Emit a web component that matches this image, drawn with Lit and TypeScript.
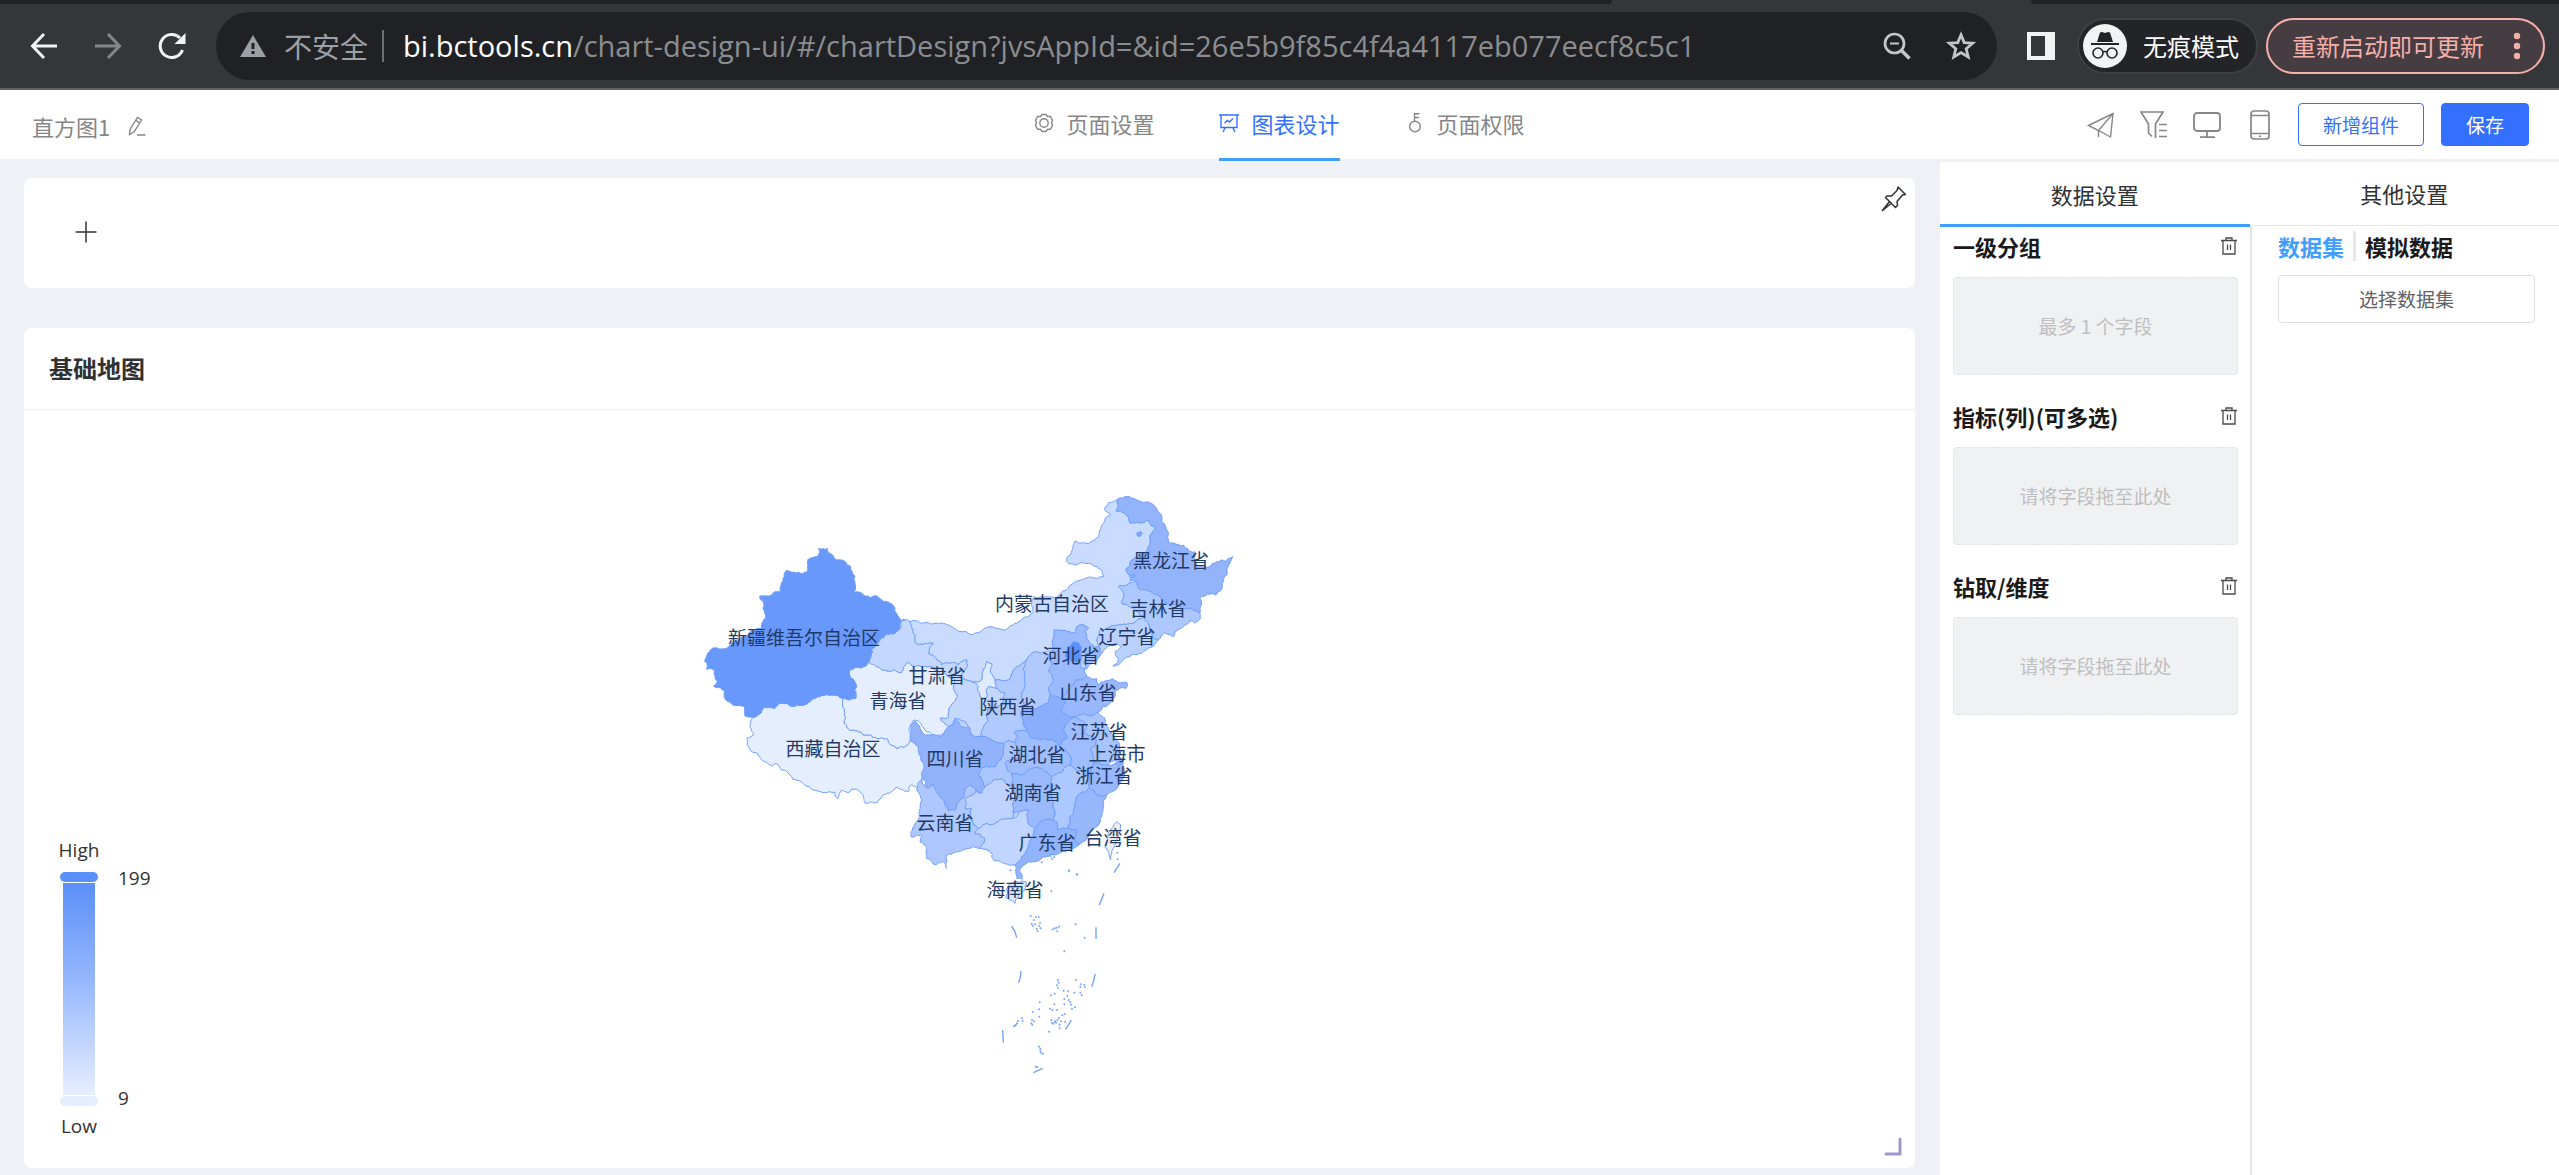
import { LitElement, html, svg, css } from "lit";
import { customElement, state } from "lit/decorators.js";

type Point = [number, number];

interface Region {
  fill: string;
  points: string;
  dx?: number;
  rough?: number;
}

/* Ground under the provinces, so that no seam between two borders shows through. */
const GROUND =
  "130,620 200,575 400,560 480,500 550,560 520,620 500,700 560,720 620,800 600,900 560,1000 500,1080 " +
  "400,1100 300,1130 200,1085 80,1080 85,900 100,780 150,745 170,660";

/* Outlines are in map units, three to a pixel. Later regions lie over earlier ones. */
const REGIONS: Region[] = [
  { fill: "#c9dbff", points: "0,422 28,424 70,429 130,430 170,450 220,463 270,440 340,435 365,420 400,395 395,370 400,350 430,352 470,352 500,330 530,303 570,290 610,290 605,270 570,250 530,255 500,245 500,235 525,183 570,188 597,170 600,150 615,115 632,105 613,85 625,68 650,60 655,75 648,92 675,100 690,130 720,130 745,122 765,145 750,165 745,200 735,220 690,255 678,268 690,285 690,310 655,320 672,345 665,370 700,385 730,412 700,430 655,435 600,450 590,480 600,505 570,490 555,455 565,445 550,432 530,440 525,460 480,450 462,450 458,480 460,510 410,515 380,540 345,565 325,600 285,600 270,575 275,550 260,545 250,570 245,600 215,605 180,590 203,560 200,540 150,550 125,555 85,520 100,490 55,495 40,460 28,424" },
  { fill: "#c4d7ff", points: "2,422 28,424 40,460 55,495 100,490 85,520 125,555 150,550 200,540 203,560 180,590 215,605 235,620 240,650 250,655 262,650 265,620 290,625 315,640 310,665 262,690 265,720 250,745 240,770 215,765 205,740 165,715 145,740 120,715 145,710 150,680 172,650 165,600 130,575 90,560 40,560 20,548 5,578 -40,573 -70,560 -95,548 -85,505 -60,480 -40,463 -20,462 -3,450" },
  { fill: "#e4eeff", dx: -630, points: "186,712 180,740 190,765 170,775 180,810 215,840 245,858 255,850 300,885 345,915 370,930 435,937 443,957 455,930 480,935 500,928 520,945 525,970 560,968 580,945 620,922 655,935 665,915 690,925 695,900 700,890 700,840 690,800 670,780 660,785 645,800 620,805 590,775 560,775 520,765 480,752 462,730 465,700 458,670 460,655 425,645 385,650 355,668 310,680 275,670 255,685 220,682 200,708" },
  { fill: "#e4eeff", dx: -630, points: "478,573 505,562 535,548 560,560 590,573 635,578 650,548 670,560 720,560 760,575 795,600 802,650 780,680 775,710 750,715 775,740 755,765 735,768 705,750 690,728 672,720 660,740 662,775 660,785 645,800 620,805 590,775 560,775 520,765 480,752 462,730 465,700 458,670 460,655 497,655 493,630 500,618 485,595" },
  { fill: "#6998fc", dx: -630, points: "385,206 412,205 415,218 435,238 470,250 483,270 495,290 495,310 490,337 520,345 560,348 590,365 608,374 615,395 632,420 627,450 610,462 590,463 570,480 545,505 535,548 505,562 478,573 485,595 500,618 493,630 497,655 460,655 425,645 385,650 355,668 310,680 275,670 255,685 220,682 200,708 186,712 165,708 160,678 130,675 108,660 105,635 70,618 82,605 75,572 50,568 43,542 52,520 80,503 110,505 145,480 215,445 215,430 228,405 220,365 208,350 250,338 275,335 270,322 290,270 320,278 353,275 355,237 385,228" },
  { fill: "#93b3fd", points: "650,60 700,55 745,65 770,85 785,125 805,165 808,190 850,195 885,215 890,255 930,260 950,245 998,230 985,260 980,285 970,305 948,345 900,352 900,398 870,385 845,390 800,370 780,350 750,333 715,325 710,305 690,300 690,285 678,268 690,255 735,220 745,200 750,165 765,145 745,122 720,130 690,130 675,100 648,92 655,75" },
  { fill: "#adc8ff", points: "690,310 710,305 715,325 750,333 780,350 800,370 845,390 870,385 900,398 902,415 885,430 870,420 850,440 825,455 820,470 795,458 775,480 755,470 745,430 730,412 700,385 665,370 672,345 655,320" },
  { fill: "#bad0ff", points: "730,412 745,430 755,470 775,480 745,505 725,520 690,530 665,545 640,560 655,535 645,515 665,500 650,492 620,500 605,520 600,505 590,480 600,450 655,435 700,430" },
  { fill: "#9bbafe", points: "462,450 480,450 525,460 530,440 550,432 565,445 555,455 570,490 600,505 605,520 590,545 565,560 552,570 560,590 530,600 510,620 500,640 480,655 450,640 460,600 445,575 455,555 440,520 460,510 458,480" },
  { fill: "#b8cfff", points: "545,515 562,525 550,545 556,566 540,560" },
  { fill: "#5b8ff9", points: "498,515 520,485 545,500 540,520 545,540 515,545 500,535" },
  { fill: "#b0caff", points: "410,515 440,520 455,555 445,575 460,600 450,640 445,670 410,685 370,685 365,655 370,630 375,590 370,570 380,540" },
  { fill: "#b0caff", points: "380,540 370,570 375,590 370,630 365,655 370,685 362,700 370,720 380,755 345,755 355,770 345,785 310,790 255,770 240,770 250,745 265,720 262,690 310,665 315,640 290,625 285,600 325,600 345,565" },
  { fill: "#e0eaff", points: "260,545 275,550 270,575 285,600 290,625 265,620 262,650 250,655 240,650 235,620 215,605 245,600 250,570" },
  { fill: "#98b7fe", points: "560,590 590,595 595,615 640,597 680,607 678,625 650,630 645,650 610,680 595,697 570,708 540,705 525,710 480,690 495,665 480,655 500,640 510,620 530,600" },
  { fill: "#8aaefc", points: "450,645 480,655 495,665 480,690 525,710 510,720 495,735 500,775 480,800 460,780 425,780 390,770 380,755 370,720 362,700 370,685 410,685 445,670" },
  { fill: "#a8c4ff", points: "525,710 540,705 570,708 595,697 615,715 625,745 650,780 665,815 645,840 625,855 600,850 580,850 570,810 590,780 550,760 560,740 540,720" },
  { fill: "#9fbdfe", points: "525,710 540,720 560,740 550,760 590,780 570,810 580,850 570,885 530,875 510,855 505,820 480,800 500,775 495,735 510,720" },
  { fill: "#acc7ff", points: "310,790 345,785 350,800 355,835 315,850 320,870 335,880 335,915 310,900 280,900 255,920 235,885 245,865 285,860 310,810" },
  { fill: "#9ebdfe", points: "345,755 380,755 390,770 425,780 460,780 480,800 505,820 510,855 490,870 455,890 440,875 395,865 370,885 335,880 320,870 315,850 355,835 350,800 345,785 355,770" },
  { fill: "#92b2fc", points: "30,735 45,722 60,745 75,765 105,765 125,770 145,740 160,735 165,715 185,740 205,740 215,765 240,770 255,770 310,790 310,810 285,860 245,865 235,885 255,920 245,940 210,915 195,930 180,960 165,990 145,992 130,960 100,910 85,925 75,920 65,890 70,850 55,805 32,780" },
  { fill: "#aec8ff", points: "65,895 75,920 85,925 100,910 130,960 145,992 165,990 180,960 195,930 210,915 230,935 195,955 195,985 215,985 215,1015 235,1045 225,1060 255,1075 240,1105 210,1105 170,1115 140,1125 140,1165 128,1145 105,1155 80,1135 80,1105 60,1085 65,1065 35,1072 40,1040 60,1010 65,960 50,925" },
  { fill: "#bed3ff", points: "195,955 230,935 245,940 255,920 280,900 310,900 335,915 345,950 340,1000 340,1015 300,1020 260,1030 235,1045 215,1015 215,985 195,985" },
  { fill: "#c0d5ff", points: "235,1045 260,1030 300,1020 340,1015 360,995 385,990 385,1030 405,1045 400,1070 385,1100 365,1130 345,1155 310,1150 280,1140 265,1110 240,1105 255,1075 225,1060" },
  { fill: "#9bbafe", points: "335,880 370,885 395,865 440,875 455,890 450,920 460,960 458,1020 420,1025 405,1045 385,1030 385,990 360,995 340,1000 345,950 335,915" },
  { fill: "#acc8ff", points: "455,890 490,870 510,855 530,875 570,885 570,925 540,940 525,980 510,1010 505,1045 475,1050 470,1025 458,1020 460,960 450,920" },
  { fill: "#97b7fd", points: "540,940 570,925 590,945 620,945 610,980 605,1010 575,1050 535,1095 530,1050 505,1045 510,1010 525,980" },
  { fill: "#98b7fe", points: "580,850 600,850 625,855 665,850 675,880 660,910 645,930 620,945 590,945 570,925 570,885" },
  { fill: "#8fb1fd", points: "645,840 668,835 672,850 655,858" },
  { fill: "#92b3fd", points: "405,1045 420,1025 458,1020 470,1025 475,1050 505,1045 530,1050 535,1095 510,1110 465,1125 440,1130 400,1145 370,1155 360,1175 367,1198 350,1195 345,1155 365,1130 385,1100 400,1070" },
  { fill: "#deeaff", points: "320,1225 345,1205 378,1205 375,1230 345,1270 320,1255" },
  { fill: "#ededed", points: "650,1025 662,1035 658,1060 650,1080 635,1115 632,1140 625,1115 615,1100 625,1060", rough: 0.05 },
  { fill: "#7fa6fc", points: "711,158 720,155 727,160 722,168 712,168" },
  { fill: "#8fb1fd", points: "694,285 702,281 706,289 698,292" },
];

const LABELS: [string, number, number][] = [
  ["新疆维吾尔自治区", 804, 636], ["甘肃省", 937, 674], ["青海省", 898, 699],
  ["西藏自治区", 833, 747], ["四川省", 955, 757], ["内蒙古自治区", 1052, 602],
  ["黑龙江省", 1171, 559], ["吉林省", 1158, 607], ["辽宁省", 1127, 635],
  ["河北省", 1071, 654], ["山东省", 1088, 691], ["陕西省", 1008, 705],
  ["江苏省", 1099, 730], ["上海市", 1117, 752], ["浙江省", 1104, 774],
  ["湖北省", 1037, 753], ["湖南省", 1033, 791], ["云南省", 945, 821],
  ["广东省", 1047, 841], ["台湾省", 1113, 836], ["海南省", 1015, 888],
];

const DASHES =
  "M480,130 L462,158 M432,220 L418,255 M408,322 L408,357 M155,318 Q166,332 170,353 M183,453 Q183,470 176,488 " +
  "M405,462 Q402,485 395,500 M334,600 L317,628 M128,630 L130,668 M248,745 L220,758";

const ISLETS =
  "212,287 228,292 236,291 222,300 215,312 225,313 240,309 238,318 218,318 230,327 233,334 242,325 278,328 290,323 " +
  "297,320 292,334 284,325 347,313 374,353 313,394 294,480 296,488 291,496 294,503 348,480 362,493 373,495 361,501 " +
  "375,502 311,512 324,514 343,518 361,518 365,526 273,526 284,521 322,528 313,537 326,540 331,546 333,554 313,553 " +
  "239,547 283,553 270,566 277,570 291,570 237,568 218,576 336,566 345,562 314,582 307,586 238,590 297,594 292,600 " +
  "286,606 280,611 276,608 274,600 284,603 288,608 303,604 299,614 315,605 299,625 267,635 186,595 188,603 174,603 " +
  "168,614 162,619 165,617 171,610 216,600 222,604 214,610 217,614 237,680 241,686 241,692 243,698 249,701 227,740 " +
  "232,741 327,151 328,153 350,162 352,164 274,214 472,98 473,117 151,151 279,100 272,108 282,112 276,116 245,127";

const unit = (a: number, b: number): number => {
  const v = Math.sin(a * 12.9898 + b * 78.233) * 43758.5453;
  return (v - Math.floor(v)) * 2 - 1;
};

/* Midpoint displacement keyed on the edge itself, so neighbours share one border. */
const roughen = (a: Point, b: Point, amount: number, depth: number): Point[] => {
  const len = Math.hypot(b[0] - a[0], b[1] - a[1]);
  if (depth === 0 || len < 6) return [a];
  const forward = a[0] < b[0] || (a[0] === b[0] && a[1] < b[1]);
  const [p, q] = forward ? [a, b] : [b, a];
  const shift = unit(p[0] + q[1], p[1] - q[0]) * amount;
  const mid: Point = [
    Math.round((p[0] + q[0]) / 2 - (q[1] - p[1]) * shift),
    Math.round((p[1] + q[1]) / 2 + (q[0] - p[0]) * shift),
  ];
  return [...roughen(a, mid, amount, depth - 1), ...roughen(mid, b, amount, depth - 1)];
};

const outline = (r: Region): string => {
  const pts = r.points.split(" ").map((s): Point => {
    const [x, y] = s.split(",").map(Number);
    return [x + (r.dx ?? 0), y];
  });
  return pts
    .flatMap((p, i) => roughen(p, pts[(i + 1) % pts.length], r.rough ?? 0.17, 3))
    .map((p) => p.join(","))
    .join(" ");
};

const PLACES = REGIONS.map((r) => ({ fill: r.fill, points: outline(r) }));

@customElement("china-map")
class ChinaMap extends LitElement {
  static styles = css`
    :host { display: block; }
    .map { display: block; width: 100%; }
    .ground { fill: #bcd1ff; }
    .region { stroke: #6f9ffb; stroke-width: 3; stroke-linejoin: round; }
    .dash { fill: none; stroke: #6f9ffb; stroke-width: 4; }
    .islet { fill: #7aa5fb; }
    .label {
      font: 19px "Noto Sans CJK SC", sans-serif;
      fill: #1f3a66;
      text-anchor: middle;
      dominant-baseline: central;
    }
  `;
  render() {
    return html`
      <svg class="map" viewBox="690 484 560 610" role="img" aria-label="基础地图">
        <g transform="translate(900 480) scale(0.33333)">
          <polygon class="ground" points=${GROUND}></polygon>
          ${PLACES.map((p) => svg`<polygon class="region" fill=${p.fill} points=${p.points}></polygon>`)}
        </g>
        <g transform="translate(960 820) scale(0.33333)">
          <path class="dash" d=${DASHES}></path>
          ${ISLETS.split(" ").map((s) => {
            const [x, y] = s.split(",").map(Number);
            return svg`<circle class="islet" cx=${x} cy=${y} r="3"></circle>`;
          })}
        </g>
        ${LABELS.map(([name, x, y]) => svg`<text class="label" x=${x} y=${y}>${name}</text>`)}
      </svg>
    `;
  }
}

@customElement("browser-bar")
class BrowserBar extends LitElement {
  static styles = css`
    :host { display: block; background: #35363a; border-bottom: 2px solid #5f6064; font-family: "Noto Sans CJK SC", sans-serif; }
    .strip { display: flex; justify-content: space-between; height: 4px; }
    .strip-left { width: 63%; background: #202124; border-radius: 0 0 8px 0; }
    .strip-right { width: 528px; background: #202124; border-radius: 0 0 0 8px; }
    .bar { display: flex; align-items: center; height: 84px; padding: 0 14px 0 24px; box-sizing: border-box; }
    button { display: flex; align-items: center; border: 0; padding: 0; background: none; color: #f1f3f4; font-family: inherit; }
    .nav { display: flex; gap: 24px; margin-right: 24px; }
    .nav button { width: 40px; height: 40px; justify-content: center; }
    .dim { color: #85868a; }
    .omnibox { flex: 1; display: flex; align-items: center; height: 68px; box-sizing: border-box; padding: 0 16px 0 24px; border-radius: 34px; background: #202124; margin-right: 30px; }
    .warn { display: flex; align-items: center; gap: 18px; font-size: 28px; line-height: 40px; color: #9aa0a6; white-space: nowrap; }
    .rule { width: 2px; height: 32px; margin: 0 19px 0 14px; background: #6d6f73; }
    .host, .path { font: 29px/40px "Open Sans", "Noto Sans CJK SC", sans-serif; }
    .host { color: #fff; }
    .path { flex: 1; min-width: 0; border: 0; padding: 0; background: none; color: #8b8d90; outline: none; }
    .tools { display: flex; gap: 24px; color: #c4c7c9; }
    .tools button { width: 40px; height: 40px; justify-content: center; color: inherit; }
    .panel { margin-right: 22px; }
    .incognito { box-sizing: border-box; height: 56px; border: 2px solid #3f4044; border-radius: 28px; padding: 0 17px 0 4px; gap: 16px; background: #232428; color: #fff; font-size: 24px; line-height: 36px; margin-right: 8px; }
    .update { box-sizing: border-box; height: 56px; border: 2px solid #f6aea9; border-radius: 28px; padding: 0 18px 0 24px; gap: 25px; background: #453d42; color: #f6aea9; font-size: 24px; line-height: 36px; }
    svg { display: block; }
  `;
  render() {
    return html`
      <div class="strip"><div class="strip-left"></div><div class="strip-right"></div></div>
      <div class="bar">
        <div class="nav">
          <button aria-label="后退"><svg width="28" height="28" viewBox="0 0 28 28" fill="none" stroke="currentColor" stroke-width="3"><path d="M27 14H3M14 2 2.500 14 14 26"></path></svg></button>
          <button class="dim" aria-label="前进"><svg width="28" height="28" viewBox="0 0 28 28" fill="none" stroke="currentColor" stroke-width="3"><path d="M1 14H25M14 2 25.500 14 14 26"></path></svg></button>
          <button aria-label="刷新"><svg width="28" height="28" viewBox="0 0 28 28"><path d="M24.500 18A11.500 11.500 0 1 1 22 6" fill="none" stroke="currentColor" stroke-width="3"></path><path d="M27.500 1V12H16.500Z" fill="currentColor"></path></svg></button>
        </div>
        <div class="omnibox">
          <div class="warn">
            <svg width="26" height="22" viewBox="0 0 26 22"><path d="M13 0 26 22H0Z" fill="#9aa0a6"></path><path d="M13 8V14M13 16V19" stroke="#202124" stroke-width="3"></path></svg>
            <span>不安全</span>
          </div>
          <div class="rule"></div>
          <span class="host">bi.bctools.cn</span>
          <input class="path" aria-label="地址" .value=${"/chart-design-ui/#/chartDesign?jvsAppId=&id=26e5b9f85c4f4a4117eb077eecf8c5c1"} />
          <div class="tools">
            <button aria-label="缩放"><svg width="28" height="28" viewBox="0 0 28 28" fill="none" stroke="currentColor"><circle cx="11.500" cy="11.500" r="9.500" stroke-width="2.700"></circle><path d="M18 18 26.500 26.500" stroke-width="3.500"></path><path d="M7 11.500H16" stroke-width="2"></path></svg></button>
            <button aria-label="收藏"><svg width="32" height="32" viewBox="0 0 30 30" fill="none" stroke="currentColor" stroke-width="2.600"><path d="M15 4.500 18 11.800 26 12.400 19.900 17.600 21.800 25.300 15 21.200 8.200 25.300 10.100 17.600 4 12.400 12 11.800Z"></path></svg></button>
          </div>
        </div>
        <button class="panel" aria-label="侧边栏"><svg width="28" height="28" viewBox="0 0 28 28"><path fill-rule="evenodd" d="M0 0H28V28H0ZM4 4V24H18V4Z" fill="currentColor"></path></svg></button>
        <button class="incognito">
          <svg width="44" height="44" viewBox="0 0 44 44" fill="none"><circle cx="22" cy="22" r="22" fill="#f1f3f4"></circle><path d="M14 18 17 8.500 19 8 22 9 25 8 27 8.500 30 18Z" fill="#232428"></path><path d="M8 20H36" stroke="#232428" stroke-width="2"></path><circle cx="15" cy="29" r="5" stroke="#232428" stroke-width="1.600"></circle><circle cx="29" cy="29" r="5" stroke="#232428" stroke-width="1.600"></circle><path d="M20 28Q22 27 24 28" stroke="#232428" stroke-width="1.600"></path></svg>
          <span>无痕模式</span>
        </button>
        <button class="update">
          <span>重新启动即可更新</span>
          <svg width="16" height="28" viewBox="0 0 16 28" fill="currentColor"><circle cx="8" cy="4" r="3.200"></circle><circle cx="8" cy="14" r="3.200"></circle><circle cx="8" cy="24" r="3.200"></circle></svg>
        </button>
      </div>
    `;
  }
}

const icons = {
  edit: svg`<path d="M4 13.500 11.500 1.500 15.500 4 8 16 3.500 18.500ZM9.800 4.300 13.800 6.800M11 19H19.500"></path>`,
  gear: svg`<path d="M8 1.500H12L13.500 3.500 16.500 3.500 18.500 7.500 17.500 10 18.500 12.500 16.500 16 13.500 16.500 12 18.500H8L6.500 16.500 3.500 16 1.500 12.500 2.500 10 1.500 7.500 3.500 3.500 6.500 3.500Z"></path><circle cx="10" cy="10" r="4.200"></circle>`,
  board: svg`<path d="M0 2H20M2 2V14.500H18V2M6 15 4 19M14 15 16 19M5.500 10 8.500 7.500 10.500 9 14 5.500"></path>`,
  key: svg`<circle cx="10" cy="13.500" r="5.300"></circle><path d="M9.500 8.500V.700H14.500M9.500 4.500H14"></path>`,
};

@customElement("design-header")
class DesignHeader extends LitElement {
  static styles = css`
    :host { display: grid; grid-template-columns: 1fr auto 1fr; height: 69px; padding: 0 30px 0 32px; background: #fff; font-family: "Noto Sans CJK SC", sans-serif; color: #868686; }
    .title { display: flex; align-items: center; gap: 16px; font-size: 22px; line-height: 32px; }
    .tabs { display: flex; gap: 65px; margin-left: -2px; }
    .tab { box-sizing: border-box; display: flex; align-items: center; gap: 12px; height: 71px; padding-bottom: 3px; border-bottom: 3px solid transparent; color: inherit; text-decoration: none; font-size: 22px; line-height: 32px; }
    .active { color: #3370ff; border-bottom-color: #409eff; }
    .actions { display: flex; align-items: center; justify-content: flex-end; padding-bottom: 2px; }
    button { font-family: inherit; padding: 0; border: 0; background: none; color: inherit; display: flex; align-items: center; justify-content: center; }
    .icons { display: flex; gap: 21px; margin-right: 22px; }
    .icons button { width: 32px; height: 32px; }
    .text { box-sizing: border-box; height: 43px; padding: 0 24px; border: 1px solid #3370ff; border-radius: 4px; font-size: 19px; line-height: 28px; color: #3370ff; }
    .primary { margin-left: 17px; background: #3370ff; color: #fff; }
    svg { display: block; fill: none; stroke: currentColor; stroke-width: 1.4; }
  `;
  private glyph(shape: unknown) {
    return html`<svg width="20" height="20" viewBox="0 0 20 20">${shape}</svg>`;
  }
  render() {
    return html`
      <div class="title"><span>直方图1</span><button aria-label="编辑名称">${this.glyph(icons.edit)}</button></div>
      <nav class="tabs">
        <a class="tab" href="#page">${this.glyph(icons.gear)}<span>页面设置</span></a>
        <a class="tab active" href="#chart">${this.glyph(icons.board)}<span>图表设计</span></a>
        <a class="tab" href="#auth">${this.glyph(icons.key)}<span>页面权限</span></a>
      </nav>
      <div class="actions">
        <div class="icons">
          <button aria-label="发布"><svg width="28" height="28" viewBox="0 0 28 28"><path d="M1.500 14.500 26 2.500 23.500 26 13.500 20.500ZM26 2.500 11.500 19.500V26M11.500 19.500 7 17"></path></svg></button>
          <button aria-label="筛选"><svg width="28" height="28" viewBox="0 0 28 28"><path d="M15.500 27V13L23 1H1L8.500 13V22L12 25.500M19 13.500H27M19 19.500H27M19 25.500H27" stroke-width="1.700"></path></svg></button>
          <button aria-label="电脑预览"><svg width="28" height="28" viewBox="0 0 28 28"><rect x="1" y="2" width="26" height="18" rx="3" stroke-width="1.800"></rect><path d="M14 20V26M7 26.200H22" stroke-width="1.800"></path></svg></button>
          <button aria-label="手机预览"><svg width="28" height="30" viewBox="0 0 28 30"><rect x="5" y="1" width="18" height="28" rx="3" stroke-width="1.700"></rect><path d="M5 5.500H23M5 23.500H23M13 26.200H15"></path></svg></button>
        </div>
        <button class="text">新增组件</button>
        <button class="text primary">保存</button>
      </div>
    `;
  }
}

@customElement("settings-panel")
class SettingsPanel extends LitElement {
  static styles = css`
    :host { display: flex; flex-direction: column; background: #fff; font-family: "Noto Sans CJK SC", sans-serif; }
    button { font-family: inherit; padding: 0; border: 0; background: none; color: inherit; }
    .tabs { display: grid; grid-template-columns: 1fr 1fr; }
    .tab { box-sizing: border-box; height: 64px; padding-bottom: 1px; border-bottom: 1px solid #e4e7ed; font-size: 22px; line-height: 32px; color: #303133; }
    .selected { height: 65px; margin-bottom: -1px; padding-top: 2px; border-bottom: 3px solid #409eff; }
    .columns { flex: 1; display: grid; grid-template-columns: 312fr 307fr; }
    .fields { padding: 4px 12px 0 13px; border-right: 2px solid #e4e5ea; display: flex; flex-direction: column; gap: 25px; }
    .head { display: flex; align-items: center; justify-content: space-between; height: 32px; margin-bottom: 15px; color: #1a1a1a; }
    h3 { margin: 0; font-size: 22px; line-height: 32px; font-weight: 700; }
    .drop { box-sizing: border-box; height: 98px; border: 1px dashed #e0e2e6; border-radius: 4px; background: #f0f1f3; display: flex; align-items: center; justify-content: center; font-size: 19px; line-height: 28px; color: #bfbfbf; }
    .source { padding: 4px 24px 0 26px; }
    .switch { display: flex; align-items: center; height: 32px; margin-bottom: 13px; }
    .switch button { font-size: 22px; line-height: 32px; font-weight: 700; color: #1a1a1a; }
    .switch .on { color: #409eff; }
    .bar { width: 3px; height: 30px; margin: 0 9px; background: #e4e7ed; }
    .pick { box-sizing: border-box; width: 100%; height: 48px; border: 1px solid #dcdfe6; border-radius: 4px; font-size: 19px; line-height: 28px; color: #606266; }
    svg { display: block; fill: none; stroke: #4a4a4a; stroke-width: 1.3; }
  `;
  @state() private groups = [
    { name: "一级分组", hint: "最多 1 个字段" },
    { name: "指标(列)(可多选)", hint: "请将字段拖至此处" },
    { name: "钻取/维度", hint: "请将字段拖至此处" },
  ];
  render() {
    return html`
      <div class="tabs">
        <button class="tab selected">数据设置</button>
        <button class="tab">其他设置</button>
      </div>
      <div class="columns">
        <div class="fields">
          ${this.groups.map((g) => html`
            <section>
              <div class="head">
                <h3>${g.name}</h3>
                <button aria-label="清空"><svg width="18" height="18" viewBox="0 0 18 18"><path d="M1 3.500H17M6 3.500V1H12V3.500M3 3.500V17H15V3.500M7.500 7.500V13M10.500 7.500V13"></path></svg></button>
              </div>
              <div class="drop">${g.hint}</div>
            </section>
          `)}
        </div>
        <div class="source">
          <div class="switch">
            <button class="on">数据集</button><div class="bar"></div><button>模拟数据</button>
          </div>
          <button class="pick">选择数据集</button>
        </div>
      </div>
    `;
  }
}

@customElement("app-root")
class AppRoot extends LitElement {
  static styles = css`
    :host { display: flex; flex-direction: column; min-height: 100vh; background: #f0f1f6; font-family: "Noto Sans CJK SC", sans-serif; }
    button { padding: 0; border: 0; background: none; display: flex; }
    .main { flex: 1; display: grid; grid-template-columns: 1fr 619px; }
    .side { margin-top: 3px; }
    .canvas { display: flex; flex-direction: column; gap: 40px; padding: 19px 25px 7px 24px; }
    .card { background: #fff; border-radius: 8px; }
    .filters { display: flex; align-items: flex-start; justify-content: space-between; height: 110px; box-sizing: border-box; padding: 8px 8px 0 51px; }
    .add { margin-top: 35px; }
    .chart { flex: 1; display: flex; flex-direction: column; }
    h2 { margin: 0; padding: 22px 25px 23px; border-bottom: 1px solid #ebecf0; font-size: 24px; line-height: 36px; font-weight: 700; color: #303133; }
    .plot { flex: 1; display: grid; grid-template-columns: 1fr 560px 1fr; align-items: center; }
    .legend { align-self: end; justify-self: start; display: grid; grid-template-columns: 42px auto; column-gap: 18px; justify-items: center; margin: 0 0 28px 34px; font: 19px/28px "Open Sans", sans-serif; color: #333; }
    .scale { display: flex; flex-direction: column; align-items: center; gap: 1px; padding: 8px 0 6px; }
    .thumb { width: 38px; height: 10px; border-radius: 5px; background: #5b8ff9; }
    .low { background: #e4eeff; }
    .ramp { width: 32px; height: 212px; background: linear-gradient(#5b8ff9, #95b6fd 45%, #e6eeff); }
    .ends { display: flex; flex-direction: column; justify-content: space-between; }
    .caption, .scale { grid-column: 1; }
    .resize { align-self: end; justify-self: end; margin: 0 13px 12px 0; }
    svg { display: block; fill: none; }
  `;
  render() {
    return html`
      <browser-bar></browser-bar>
      <design-header></design-header>
      <div class="main">
        <div class="canvas">
          <div class="card filters">
            <button class="add" aria-label="添加筛选"><svg width="22" height="22" viewBox="0 0 22 22" stroke="#333" stroke-width="1.500"><path d="M11 .500V21.500M.500 11H21.500"></path></svg></button>
            <button aria-label="固定"><svg width="26" height="26" viewBox="0 0 26 26" stroke="#333" stroke-width="1.500" stroke-linejoin="round"><path d="M1 25 8.500 15.500M1 25 10 17.500M4.500 11.500 14.500 21.500 16.500 19.500 16 15.500 21.500 9 24.500 8.500 17 1 16 4.500 10.500 10 6 10Z"></path></svg></button>
          </div>
          <section class="card chart">
            <h2>基础地图</h2>
            <div class="plot">
              <div class="legend">
                <span class="caption">High</span>
                <div class="scale"><div class="thumb"></div><div class="ramp"></div><div class="thumb low"></div></div>
                <div class="ends"><span>199</span><span>9</span></div>
                <span class="caption">Low</span>
              </div>
              <china-map></china-map>
              <div class="resize"><svg width="18" height="19" viewBox="0 0 18 19" stroke="#9f99cb" stroke-width="3" stroke-linecap="round"><path d="M16 2V17H2"></path></svg></div>
            </div>
          </section>
        </div>
        <settings-panel class="side"></settings-panel>
      </div>
    `;
  }
}
